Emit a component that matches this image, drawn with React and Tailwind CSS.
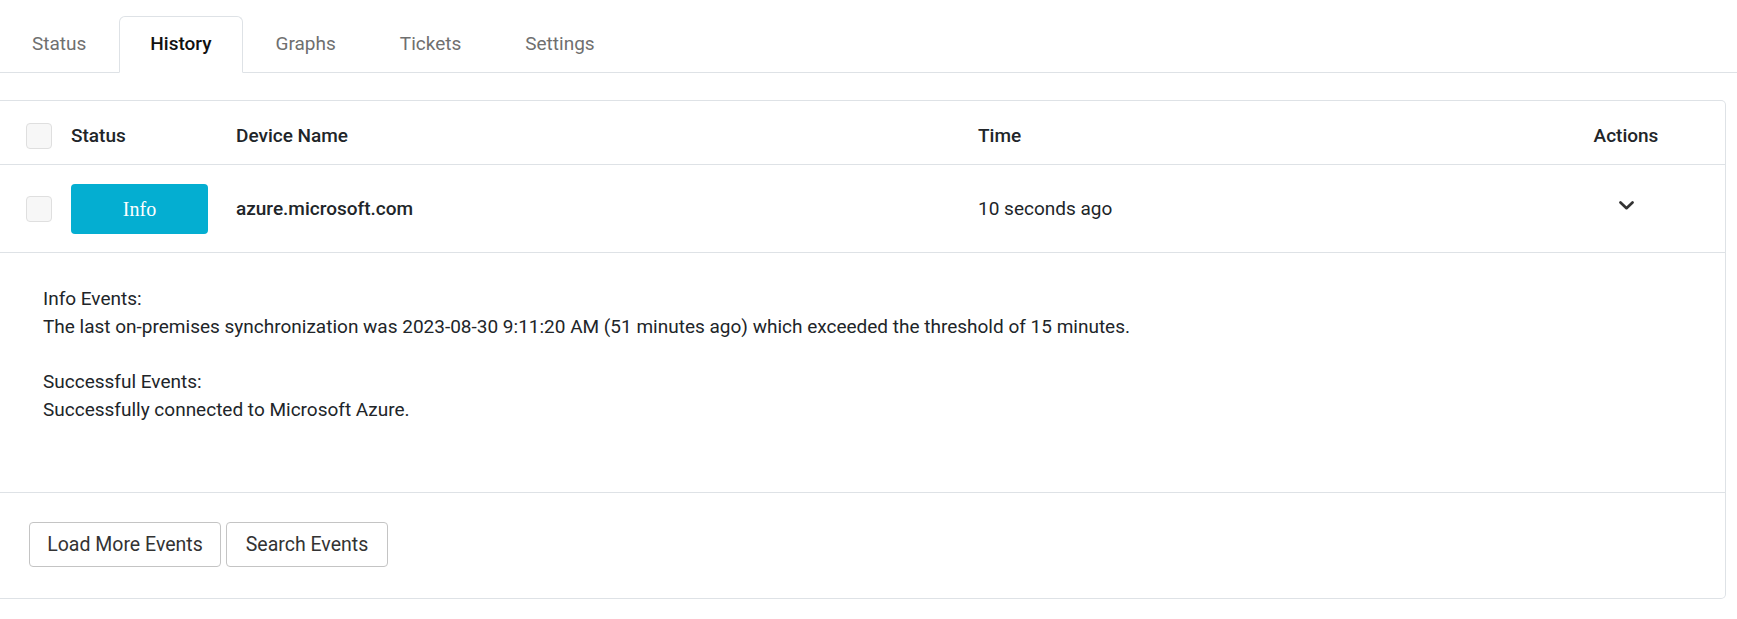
import { useState } from "react";

const tabs = ["Status", "History", "Graphs", "Tickets", "Settings"];

function Checkbox() {
  return <div className="w-[26px] h-[26px] bg-[#f7f7f7] border border-[#dfdfdf] rounded-[4px]" />;
}

export default function App() {
  const [active, setActive] = useState("History");

  return (
    <div className="bg-white w-[1737px] h-[619px] overflow-hidden font-['Roboto',sans-serif] text-[#212529]">
      {/* tabs */}
      <div className="h-[73px] pt-4 pl-[1px] flex gap-[2px] border-b border-[#dee2e6]">
        {tabs.map((t) => (
          <button
            key={t}
            onClick={() => setActive(t)}
            className={`h-[57px] px-[30px] flex items-center text-[19px] border rounded-t-[6px] ${
              active === t
                ? "border-[#dee2e6] border-b-white bg-white text-[#111] font-medium"
                : "border-transparent text-[#6f6f6f]"
            }`}
          >
            {t}
          </button>
        ))}
      </div>

      {/* history card */}
      <div className="mt-[27px] w-[1726px] border-y border-r border-[#dee2e6] rounded-r-[5px]">
        <div className="h-[64px] pt-[8px] grid grid-cols-[71px_165px_742px_1fr_66px] pr-[66px] items-center border-b border-[#dee2e6] text-[19px] font-medium">
          <div className="pl-[26px] -mt-[2px]"><Checkbox /></div>
          <div>Status</div>
          <div>Device Name</div>
          <div>Time</div>
          <div className="text-center">Actions</div>
        </div>

        <div className="h-[88px] pt-[1px] grid grid-cols-[71px_165px_742px_1fr_66px] pr-[66px] items-center border-b border-[#dee2e6] text-[19px]">
          <div className="pl-[26px]"><Checkbox /></div>
          <div>
            <div className="w-[137px] h-[50px] rounded-[4px] bg-[#04aed1] text-white flex items-center justify-center font-['Liberation_Serif',serif] text-[20px]">
              Info
            </div>
          </div>
          <div className="font-medium">azure.microsoft.com</div>
          <div>10 seconds ago</div>
          <div className="flex justify-center -mt-[7px]">
            <svg width="15" height="9" viewBox="0 0 15 9" fill="none" stroke="#333" strokeWidth="2.7" strokeLinecap="round" strokeLinejoin="round">
              <polyline points="1.5,1.5 7.5,7.2 13.5,1.5" />
            </svg>
          </div>
        </div>

        <div className="h-[239px] pt-[32px] pl-[43px] text-[19px] leading-[27.7px] whitespace-pre-line">
          {"Info Events:\nThe last on-premises synchronization was 2023-08-30 9:11:20 AM (51 minutes ago) which exceeded the threshold of 15 minutes.\n\nSuccessful Events:\nSuccessfully connected to Microsoft Azure."}
        </div>

        <div className="h-[106px] pt-[29px] pl-[29px] flex gap-[5px] items-start border-t border-[#dee2e6]">
          <button className="w-[192px] h-[45px] border border-[#c4c4c4] rounded-[4px] text-[19.5px] text-[#333]">
            Load More Events
          </button>
          <button className="w-[162px] h-[45px] border border-[#c4c4c4] rounded-[4px] text-[19.5px] text-[#333]">
            Search Events
          </button>
        </div>
      </div>
    </div>
  );
}
